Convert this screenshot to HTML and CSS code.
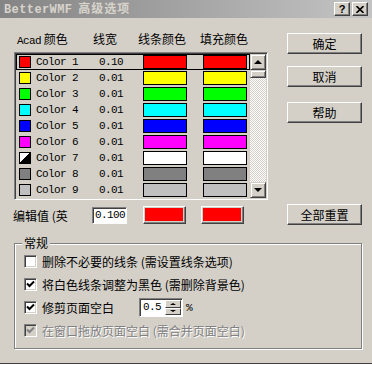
FILE: index.html
```html
<!DOCTYPE html>
<html lang="zh">
<head>
  <meta charset="UTF-8" />
  <title>BetterWMF 高级选项</title>
  <link rel="stylesheet" href="styles.css">
</head>
<body>
  <div class="dlg">
    <div class="titlebar">
      <span class="title"><b class="mono">BetterWMF</b> 高级选项</span>
      <span class="tbtns">
        <span class="tbtn">?</span>
        <span class="tbtn">
          <svg width="8" height="7" viewBox="0 0 8 7"><path d="M0.5 0 L7.5 7 M7.5 0 L0.5 7" stroke="#000" stroke-width="1.6"/></svg>
        </span>
      </span>
    </div>

    <div class="main">
      <div class="left">
        <div class="heads">
          <span class="h1"><span class="mono">Acad</span> 颜色</span>
          <span class="h2">线宽</span>
          <span class="h3">线条颜色</span>
          <span>填充颜色</span>
        </div>

        <div class="listbox">
          <div class="rows">
            <div class="row sel"><i class="ico" style="background:#f00"></i><span class="name">Color 1</span><span class="val">0.10</span><i class="sw" style="background:#f00"></i><i class="sw" style="background:#f00"></i></div>
            <div class="row"><i class="ico" style="background:#ff0"></i><span class="name">Color 2</span><span class="val">0.01</span><i class="sw" style="background:#ff0"></i><i class="sw" style="background:#ff0"></i></div>
            <div class="row"><i class="ico" style="background:#0f0"></i><span class="name">Color 3</span><span class="val">0.01</span><i class="sw" style="background:#0f0"></i><i class="sw" style="background:#0f0"></i></div>
            <div class="row"><i class="ico" style="background:#0ff"></i><span class="name">Color 4</span><span class="val">0.01</span><i class="sw" style="background:#0ff"></i><i class="sw" style="background:#0ff"></i></div>
            <div class="row"><i class="ico" style="background:#00f"></i><span class="name">Color 5</span><span class="val">0.01</span><i class="sw" style="background:#00f"></i><i class="sw" style="background:#00f"></i></div>
            <div class="row"><i class="ico" style="background:#f0f"></i><span class="name">Color 6</span><span class="val">0.01</span><i class="sw" style="background:#f0f"></i><i class="sw" style="background:#f0f"></i></div>
            <div class="row"><i class="ico ico-bw"></i><span class="name">Color 7</span><span class="val">0.01</span><i class="sw" style="background:#fff"></i><i class="sw" style="background:#fff"></i></div>
            <div class="row"><i class="ico" style="background:#808080"></i><span class="name">Color 8</span><span class="val">0.01</span><i class="sw" style="background:#808080"></i><i class="sw" style="background:#808080"></i></div>
            <div class="row"><i class="ico" style="background:#c0c0c0"></i><span class="name">Color 9</span><span class="val">0.01</span><i class="sw" style="background:#c0c0c0"></i><i class="sw" style="background:#c0c0c0"></i></div>
          </div>
          <div class="scroll">
            <span class="sbtn"><i class="arr up"></i></span>
            <span class="thumb"></span>
            <span class="track"></span>
            <span class="sbtn"><i class="arr down"></i></span>
          </div>
        </div>

        <div class="editrow">
          <span class="elabel">编辑值 (英</span>
          <span class="field mono">0.100</span>
          <span class="cbtn"><i></i></span>
          <span class="cbtn"><i></i></span>
        </div>
      </div>

      <div class="right">
        <span class="btn b-ok">确定</span>
        <span class="btn b-cancel">取消</span>
        <span class="btn b-help">帮助</span>
        <span class="btn b-reset">全部重置</span>
      </div>
    </div>

    <fieldset class="group">
      <legend>常规</legend>
      <div class="opt"><span class="chk"></span>删除不必要的线条 (需设置线条选项)</div>
      <div class="opt"><span class="chk"><svg width="9" height="9" viewBox="0 0 9 9"><path d="M1 3.5 L3.5 6 L8 1.5" fill="none" stroke="#000" stroke-width="2"/></svg></span>将白色线条调整为黑色 (需删除背景色)</div>
      <div class="opt">
        <span class="chk"><svg width="9" height="9" viewBox="0 0 9 9"><path d="M1 3.5 L3.5 6 L8 1.5" fill="none" stroke="#000" stroke-width="2"/></svg></span>
        <span class="trimlabel">修剪页面空白</span>
        <span class="spin">
          <span class="spinval mono">0.5</span>
          <span class="spinbtns">
            <span class="sp"><i class="arr up small"></i></span>
            <span class="sp"><i class="arr down small"></i></span>
          </span>
        </span>
        <span class="pct">%</span>
      </div>
      <div class="opt disabled"><span class="chk"><svg width="9" height="9" viewBox="0 0 9 9"><path d="M1 3.5 L3.5 6 L8 1.5" fill="none" stroke="#808080" stroke-width="2"/></svg></span>在窗口拖放页面空白 (需合并页面空白)</div>
    </fieldset>

    <div class="bottomline"></div>
  </div>
</body>
</html>
```

FILE: styles.css
```css
body {
  margin: 0;
  background: #d4d0c8;
  font-family: "Noto Sans CJK SC", "Liberation Sans", sans-serif;
  font-size: 12px;
  color: #000;
}
.mono {
  font-family: "Liberation Mono", "Noto Sans CJK SC", monospace;
  font-size: 11px;
  letter-spacing: -0.6px;
}
.dlg {
  width: 372px;
  height: 365px;
  overflow: hidden;
  background: #d4d0c8;
}

/* title */
.titlebar {
  height: 18px;
  display: flex;
  align-items: center;
  justify-content: space-between;
  padding: 0 4px 0 4px;
  background: linear-gradient(90deg, #848484, #c4c4c4);
  color: #d8d4cc;
}
.title {
  font-weight: bold;
  font-size: 12px;
  letter-spacing: 1px;
  line-height: 18px;
}
.title .mono {
  font-size: 12px;
  letter-spacing: 0.4px;
  margin-right: 2px;
}
.tbtns {
  display: flex;
  gap: 2px;
}
.tbtn {
  width: 14px;
  height: 12px;
  display: flex;
  align-items: center;
  justify-content: center;
  background: #d4d0c8;
  border: 1px solid;
  border-color: #fff #404040 #404040 #fff;
  box-shadow: inset -1px -1px 0 #808080;
  color: #000;
  font-family: "Liberation Sans", sans-serif;
  font-weight: bold;
  font-size: 11px;
  letter-spacing: 0;
}

/* main area */
.main {
  display: flex;
}
.left {
  margin-left: 14px;
  width: 254px;
}
.heads {
  display: flex;
  height: 14px;
  line-height: 14px;
  margin-top: 14px;
  padding-left: 3px;
}
.heads .h1 { width: 76px; }
.heads .h2 { width: 45px; }
.heads .h3 { width: 62px; }

.listbox {
  margin-top: 6px;
  height: 144px;
  display: flex;
  border: 1px solid;
  border-color: #808080 #fff #fff #808080;
  box-shadow: inset 1px 1px 0 #404040, inset -1px -1px 0 #d4d0c8;
  padding: 1px;
}
.rows {
  width: 234px;
}
.row {
  height: 16px;
  display: flex;
  align-items: center;
  padding-left: 3px;
  box-sizing: border-box;
}
.row > * {
  flex-shrink: 0;
}
.row.sel {
  border: 1px solid #000;
  padding-left: 2px;
}
.ico {
  width: 12px;
  height: 12px;
  box-sizing: border-box;
  border: 1px solid #000;
  margin-right: 5px;
}
.ico-bw {
  background: linear-gradient(to bottom right, #fff 50%, #000 50%);
}
.name {
  width: 63px;
  font-family: "Liberation Mono", monospace;
  font-size: 11px;
  letter-spacing: -0.6px;
}
.val {
  width: 44px;
  font-family: "Liberation Mono", monospace;
  font-size: 11px;
  letter-spacing: -0.6px;
}
.sw {
  width: 44px;
  height: 14px;
  box-sizing: border-box;
  border: 1px solid #000;
}
.sw + .sw {
  margin-left: 16px;
}

.scroll {
  width: 16px;
  display: flex;
  flex-direction: column;
}
.sbtn, .thumb {
  height: 16px;
  box-sizing: border-box;
  background: #d4d0c8;
  border: 1px solid;
  border-color: #d4d0c8 #404040 #404040 #d4d0c8;
  box-shadow: inset 1px 1px 0 #fff, inset -1px -1px 0 #808080;
  display: flex;
  align-items: center;
  justify-content: center;
}
.thumb {
  height: 8px;
}
.track {
  flex: 1;
  background: repeating-conic-gradient(#fff 0 25%, #d4d0c8 0 50%) 0 0 / 2px 2px;
}
.arr {
  width: 0;
  height: 0;
  border-left: 4px solid transparent;
  border-right: 4px solid transparent;
}
.arr.up { border-bottom: 4px solid #000; }
.arr.down { border-top: 4px solid #000; }
.arr.small {
  border-left-width: 3px;
  border-right-width: 3px;
}
.arr.small.up { border-bottom-width: 2px; }
.arr.small.down { border-top-width: 2px; }

.editrow {
  display: flex;
  align-items: center;
  height: 24px;
  margin-top: 3px;
}
.editrow > * {
  flex-shrink: 0;
}
.elabel {
  width: 64px;
  margin-left: -1px;
  margin-right: 15px;
  white-space: nowrap;
}
.field {
  width: 35px;
  height: 17px;
  box-sizing: border-box;
  background: #fff;
  border: 1px solid;
  border-color: #808080 #fff #fff #808080;
  box-shadow: inset 1px 1px 0 #404040;
  padding-left: 2px;
  line-height: 15px;
  margin-right: 16px;
}
.cbtn {
  width: 43px;
  height: 18px;
  box-sizing: border-box;
  border: 1px solid;
  border-color: #fff #404040 #404040 #fff;
  box-shadow: inset -1px -1px 0 #808080;
  padding: 1px 2px 2px 1px;
  display: flex;
}
.cbtn + .cbtn {
  margin-left: 15px;
}
.cbtn i {
  flex: 1;
  background: #f00;
}

.right {
  margin-left: 19px;
  width: 75px;
  display: flex;
  flex-direction: column;
  padding-top: 15px;
}
.btn {
  height: 21px;
  box-sizing: border-box;
  display: flex;
  align-items: center;
  justify-content: center;
  background: #d4d0c8;
  border: 1px solid;
  border-color: #fff #404040 #404040 #fff;
  box-shadow: inset -1px -1px 0 #808080;
}
.b-cancel { margin-top: 12px; }
.b-help { margin-top: 15px; }
.b-reset { margin-top: 81px; }

/* group box */
.group {
  margin: 9px 0 0 14px;
  width: 348px;
  height: 113px;
  box-sizing: border-box;
  padding: 0;
  border: 1px solid #808080;
  box-shadow: inset 1px 1px 0 #fff, 1px 1px 0 #fff;
}
.group legend {
  margin-left: 7px;
  padding: 0 2px;
  line-height: 14px;
  background: #d4d0c8;
}
.opt {
  height: 23px;
  display: flex;
  align-items: center;
  padding-left: 9px;
  white-space: nowrap;
}
.chk {
  width: 13px;
  height: 13px;
  box-sizing: border-box;
  background: #fff;
  border: 1px solid;
  border-color: #808080 #fff #fff #808080;
  box-shadow: inset 1px 1px 0 #404040, inset -1px -1px 0 #d4d0c8;
  margin-right: 5px;
  display: flex;
  align-items: center;
  justify-content: center;
}
.opt.disabled {
  color: #808080;
  text-shadow: 1px 1px 0 #fff;
}
.opt.disabled .chk {
  background: #d4d0c8;
}
.trimlabel {
  width: 97px;
}
.spin {
  width: 44px;
  height: 19px;
  box-sizing: border-box;
  background: #fff;
  border: 1px solid;
  border-color: #808080 #fff #fff #808080;
  box-shadow: inset 1px 1px 0 #404040;
  display: flex;
  padding: 1px;
}
.spinval {
  flex: 1;
  padding-left: 2px;
  line-height: 15px;
}
.spinbtns {
  width: 16px;
  display: flex;
  flex-direction: column;
}
.sp {
  flex: 1;
  box-sizing: border-box;
  background: #d4d0c8;
  border: 1px solid;
  border-color: #fff #404040 #404040 #fff;
  display: flex;
  align-items: center;
  justify-content: center;
}
.pct {
  margin-left: 3px;
  font-family: "Liberation Mono", monospace;
  font-size: 11px;
}

.bottomline {
  margin-top: 14px;
  height: 0;
  border-top: 1px solid #404040;
  border-bottom: 1px solid #fff;
}
```
